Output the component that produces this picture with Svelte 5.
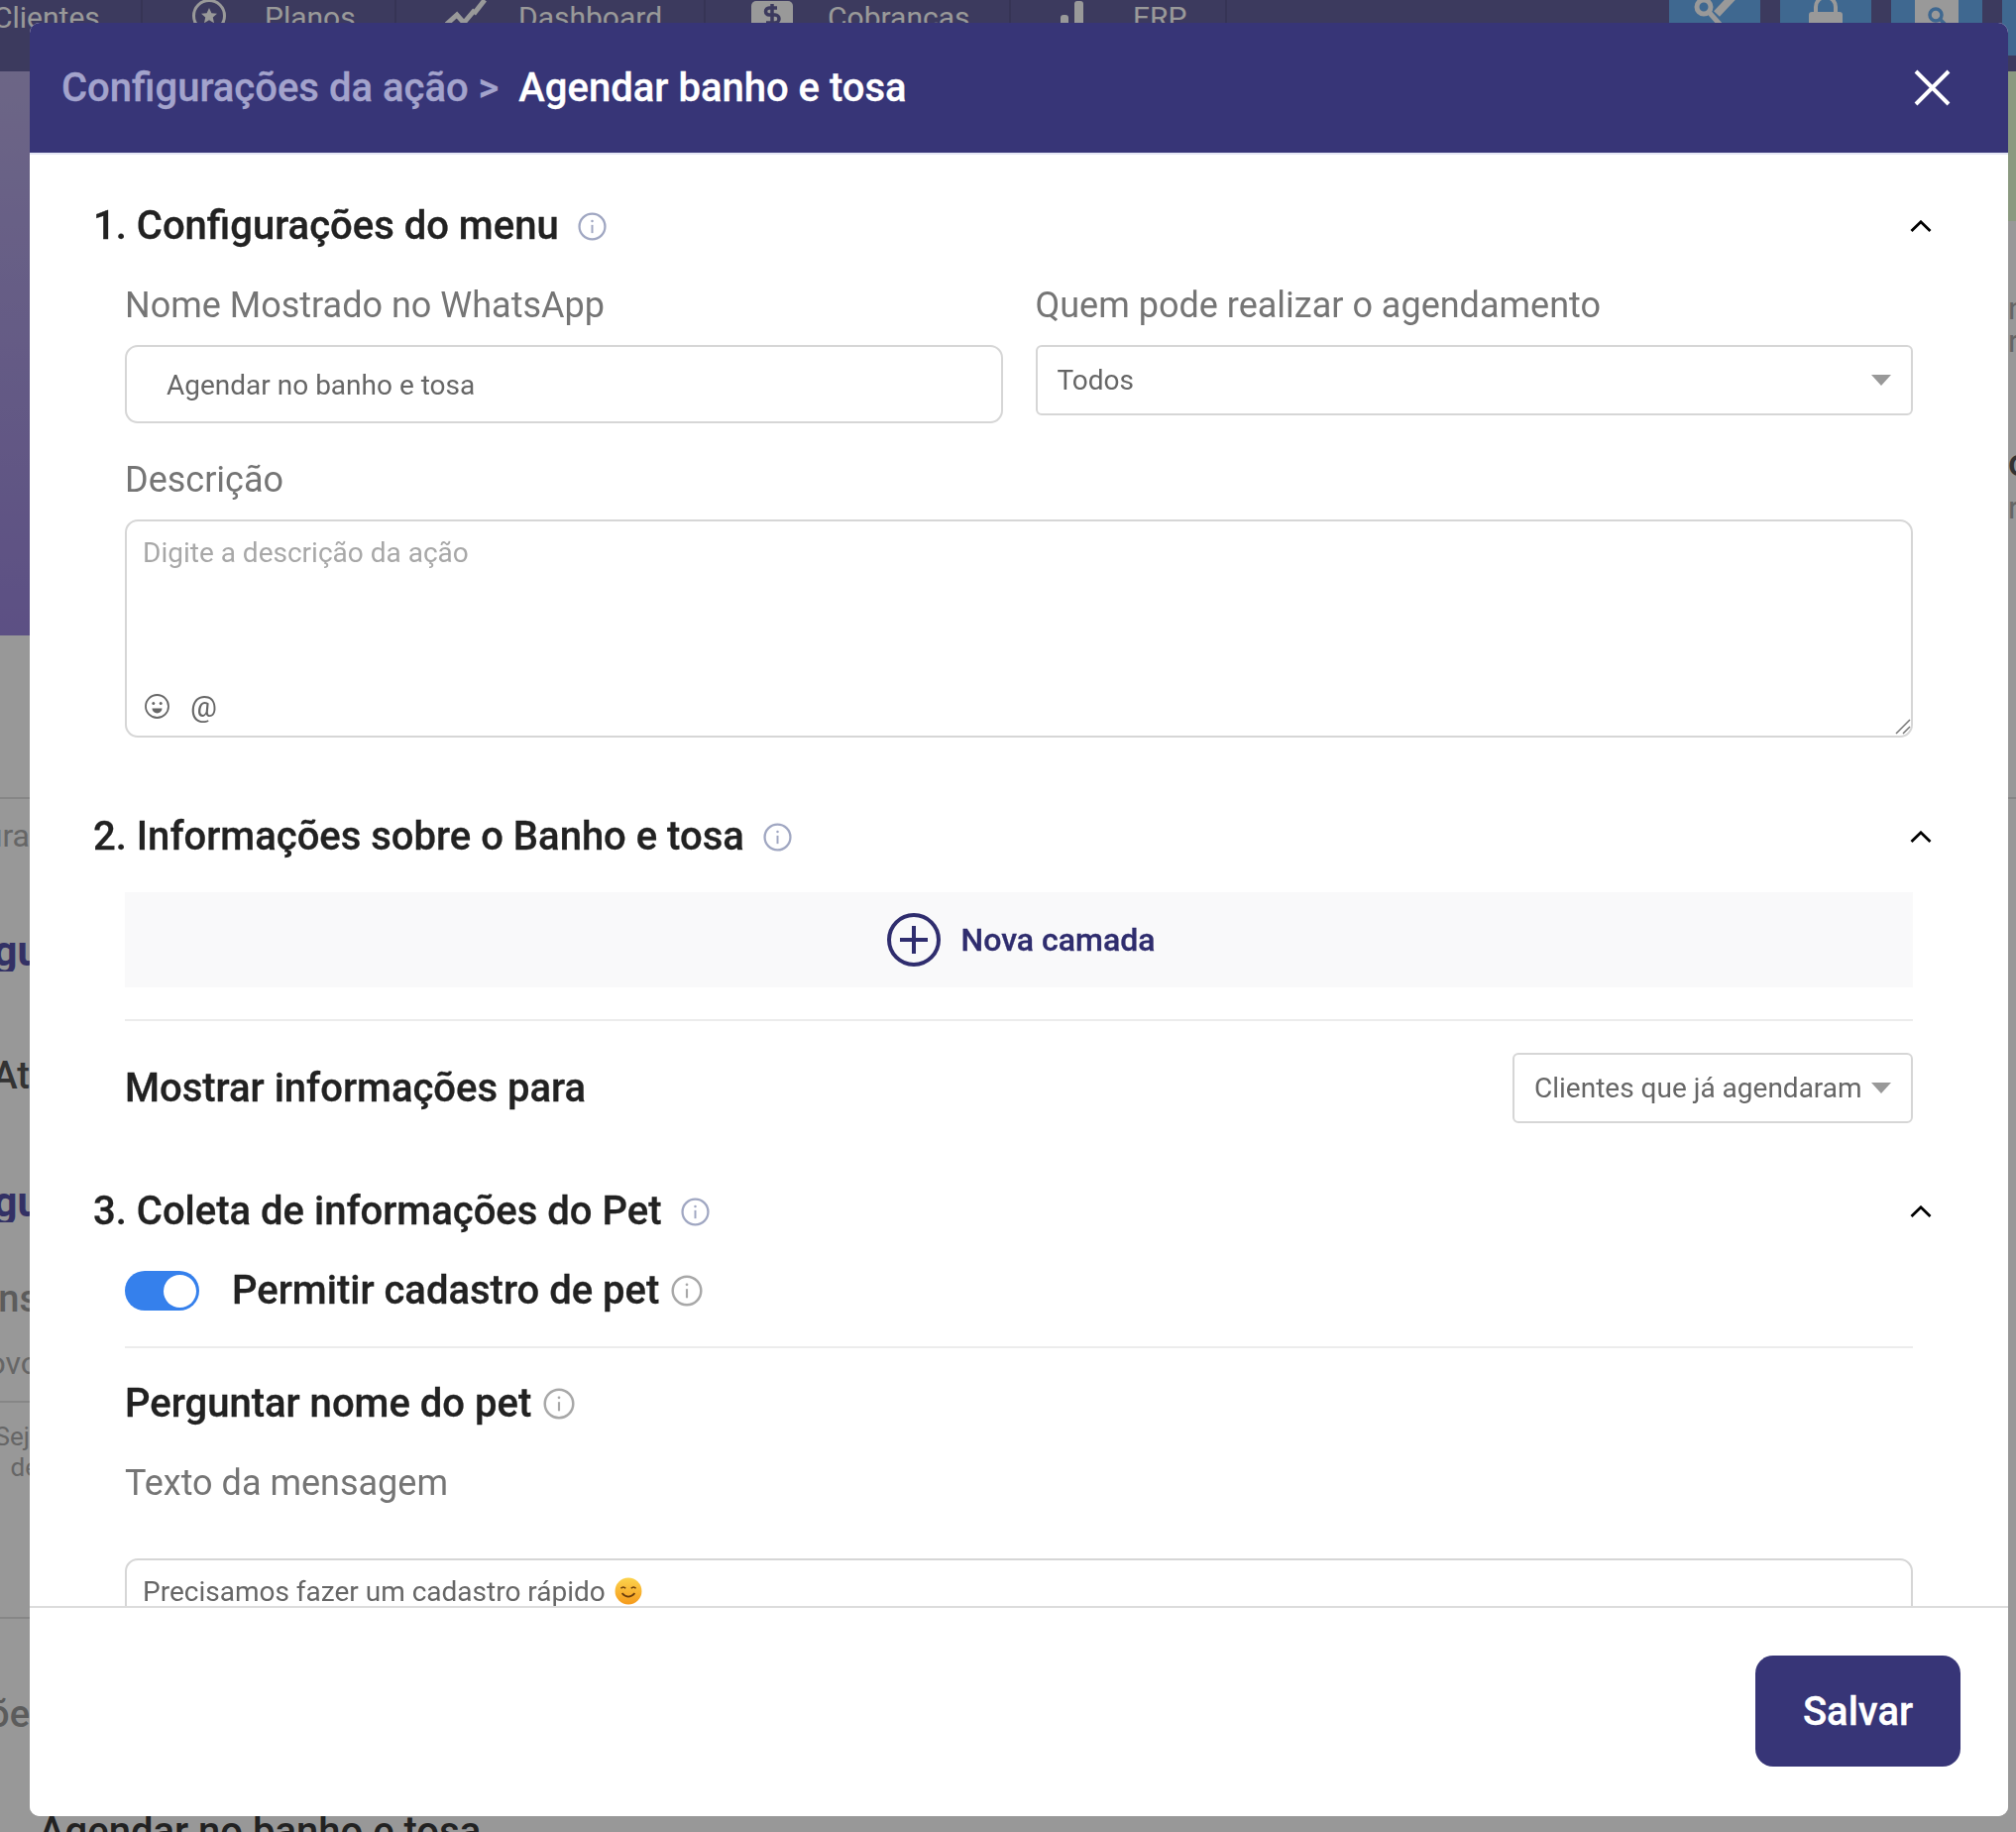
<script>
  const navItems = [
    { label: "Clientes", w: 144, icon: null, first: true },
    { label: "Planos", w: 256, icon: "star" },
    { label: "Dashboard", w: 312, icon: "chart" },
    { label: "Cobranças", w: 308, icon: "money" },
    { label: "ERP", w: 218, icon: "bars" },
  ];

  // what peeks out to the left of the modal: y is the centre of each row
  const leftRows = [
    { y: 805, line: true },
    { y: 843, text: "Configura", cls: "grey" },
    { y: 960, text: "Configu", cls: "navy" },
    { y: 1085, text: "At", cls: "dark" },
    { y: 1213, text: "Configu", cls: "navy" },
    { y: 1310, text: "Mens", cls: "grey strong crop" },
    { y: 1375, text: "Novo", cls: "grey crop" },
    { y: 1414, line: true },
    { y: 1449, text: "Sej", cls: "grey small" },
    { y: 1480, text: "de", cls: "grey small crop" },
    { y: 1632, line: true },
    { y: 1729, text: "Configuraçõe", cls: "grey strong" },
  ];
  const rightRows = [
    { y: 311, text: "n", cls: "grey" },
    { y: 344, text: "r", cls: "grey" },
    { y: 467, text: "o", cls: "dark" },
    { y: 512, text: "r", cls: "grey" },
    { y: 805, line: true },
  ];

  function withGaps(rows, start) {
    let prev = start;
    return rows.map((r) => {
      const h = r.line ? 2 : 40;
      const top = r.y - h / 2;
      const gap = Math.round(top - prev);
      prev = top + h;
      return { ...r, gap };
    });
  }

  const left = withGaps(leftRows, 641);
  const right = withGaps(rightRows, 223);
</script>

{#snippet info(cls = "")}
  <svg class="info {cls}" viewBox="0 0 28 28" fill="none" stroke="currentColor" aria-hidden="true">
    <circle cx="14" cy="14" r="12.5" stroke-width="2.2" />
    <path d="M14 12.4v8" stroke-width="1.9" />
    <circle cx="14" cy="8.6" r="1.2" fill="currentColor" stroke="none" />
  </svg>
{/snippet}

{#snippet chevron()}
  <svg class="chevron" viewBox="0 0 22 12" fill="none" stroke="#000" stroke-width="2.8" aria-hidden="true">
    <path d="M1.5 11 11 1.8 20.5 11" />
  </svg>
{/snippet}

<div class="page">
  <nav class="topnav">
    {#each navItems as item}
      <div class="navitem" class:first={item.first} style:width="{item.w}px">
        {#if item.icon}
          <span class="navicon">
            {#if item.icon === "star"}
              <svg width="36" height="36" viewBox="0 0 36 36" fill="none" stroke="#fff">
                <circle cx="18" cy="16" r="15.5" stroke-width="3" />
                <path d="m18 8 2.4 5.2 5.6.6-4.2 3.8 1.2 5.6-5-2.9-5 2.9 1.2-5.6L10 13.800l5.600-.6z" fill="#fff" stroke="none" />
              </svg>
            {:else if item.icon === "chart"}
              <svg width="42" height="36" viewBox="0 0 42 36" fill="none" stroke="#fff" stroke-width="5">
                <path d="M1 25 12 15l7 8 11-13" />
                <path d="M29 14 40 0" />
              </svg>
            {:else if item.icon === "money"}
              <svg class="shiftleft" width="44" height="36" viewBox="0 0 44 36">
                <rect x="1" y="1" width="42" height="35" rx="5" fill="#fff" />
                <path d="M27 8h-8a3.500 3.500 0 0 0 0 7h6a3.500 3.500 0 0 1 0 8h-9M22 4v24" fill="none" stroke="#64619d" stroke-width="3.500" />
              </svg>
            {:else}
              <svg width="36" height="36" viewBox="0 0 36 36" fill="#fff">
                <rect x="1" y="15" width="8" height="21" rx="3" />
                <rect x="15" y="1" width="9" height="35" rx="3" />
                <rect x="28" y="29" width="8" height="7" rx="3" />
              </svg>
            {/if}
          </span>
        {/if}
        <span>{item.label}</span>
      </div>
    {/each}
    <div class="navbuttons">
      <div class="navbtn">
        <svg width="44" height="40" viewBox="0 0 44 40" fill="none" stroke="#fff">
          <circle cx="11" cy="7" r="7" stroke-width="5" />
          <path d="M16 12 32 30" stroke-width="5" />
          <path d="M24 14 40 -3" stroke-width="8" />
        </svg>
      </div>
      <div class="navbtn">
        <svg width="36" height="40" viewBox="0 0 36 40" fill="none">
          <path d="M8 14V7a10 10 0 0 1 20 0v7" stroke="#fff" stroke-width="4" />
          <rect x="1" y="12" width="34" height="26" rx="3" fill="#fff" />
        </svg>
      </div>
      <div class="navbtn">
        <svg width="44" height="40" viewBox="0 0 44 40" fill="none">
          <rect x="0" y="-8" width="44" height="46" rx="6" fill="#fff" />
          <circle cx="21" cy="15" r="6" stroke="#69adf0" stroke-width="3.500" />
          <path d="m26 20 6 6" stroke="#69adf0" stroke-width="3.500" />
        </svg>
      </div>
      <div class="navbtn"></div>
    </div>
  </nav>

  <div class="stage">
    <div class="leftcol">
      <div class="hero"></div>
      {#each left as r}
        {#if r.line}
          <div class="rule" style:margin-top="{r.gap}px"></div>
        {:else}
          <div class="frag {r.cls}" style:margin-top="{r.gap}px"><span>{r.text}</span></div>
        {/if}
      {/each}
      <div class="under">Agendar no banho e tosa</div>
    </div>
    <div class="rightcol">
      <div class="greenband"></div>
      {#each right as r}
        {#if r.line}
          <div class="rule" style:margin-top="{r.gap}px"></div>
        {:else}
          <div class="frag start {r.cls}" style:margin-top="{r.gap}px"><span>{r.text}</span></div>
        {/if}
      {/each}
    </div>
  </div>
</div>

<div class="scrim"></div>

<div class="modal">
  <header class="modalhead">
    <h2><span class="crumb">Configurações da ação &gt;</span> <span>Agendar banho e tosa</span></h2>
    <svg class="close" viewBox="0 0 37 37" stroke="#fff" stroke-width="4" aria-label="Fechar">
      <path d="M2 2 35 35M35 2 2 35" />
    </svg>
  </header>

  <div class="modalbody">
    <section class="first">
      <div class="sechead">
        <h3>1. Configurações do menu {@render info()}</h3>
        {@render chevron()}
      </div>
      <div class="fields">
        <div class="tworow">
          <div>
            <div class="label">Nome Mostrado no WhatsApp</div>
            <input class="textinput" value="Agendar no banho e tosa" />
          </div>
          <div>
            <div class="label">Quem pode realizar o agendamento</div>
            <div class="select"><span>Todos</span><i class="arrow"></i></div>
          </div>
        </div>
        <div class="label desc">Descrição</div>
        <div class="areawrap">
          <textarea placeholder="Digite a descrição da ação"></textarea>
          <div class="areatools">
            <svg width="27" height="27" viewBox="0 0 27 27" fill="none" stroke="#666" stroke-width="1.800">
              <circle cx="13.500" cy="13.500" r="11.500" />
              <circle cx="9.800" cy="10.500" r="1.500" fill="#666" stroke="none" />
              <circle cx="17.200" cy="10.500" r="1.500" fill="#666" stroke="none" />
              <path d="M8.500 15.500h10a5 5 0 0 1-10 0z" fill="#666" stroke="none" />
            </svg>
            <span class="at">@</span>
          </div>
          <svg class="grip" width="16" height="16" viewBox="0 0 16 16" fill="none" stroke="#777" stroke-width="1.500">
            <path d="M1 15 15 1M8 15l7-7" />
          </svg>
        </div>
      </div>
    </section>

    <section class="second">
      <div class="sechead">
        <h3>2. Informações sobre o Banho e tosa {@render info()}</h3>
        {@render chevron()}
      </div>
      <div class="fields">
        <div class="newlayer">
          <svg width="54" height="54" viewBox="0 0 54 54" fill="none" stroke="#2f2d6e" stroke-width="4">
            <circle cx="27" cy="27" r="25" />
            <path d="M27 13v28M13 27h28" />
          </svg>
          <span>Nova camada</span>
        </div>
        <hr />
        <div class="showfor">
          <div class="bigtitle">Mostrar informações para</div>
          <div class="select small"><span>Clientes que já agendaram</span><i class="arrow"></i></div>
        </div>
      </div>
    </section>

    <section class="third">
      <div class="sechead">
        <h3>3. Coleta de informações do Pet {@render info()}</h3>
        {@render chevron()}
      </div>
      <div class="fields">
        <div class="togglerow">
          <span class="toggle"><span class="knob"></span></span>
          <span class="bigtitle">Permitir cadastro de pet</span>
          {@render info("grey big")}
        </div>
        <hr class="tight" />
        <div class="bigtitle askname">Perguntar nome do pet {@render info("grey big")}</div>
        <div class="label msg">Texto da mensagem</div>
        <div class="msgbox">
          Precisamos fazer um cadastro rápido
          <svg class="emoji" width="28" height="28" viewBox="0 0 26 26" role="img" aria-label="sorriso">
            <defs>
              <linearGradient id="face" x1="0" y1="0" x2="0" y2="1">
                <stop offset="0" stop-color="#fcd34d" />
                <stop offset="1" stop-color="#f59a1b" />
              </linearGradient>
            </defs>
            <circle cx="13" cy="13" r="12.500" fill="url(#face)" />
            <path d="M6 10.500q2.200-2.500 4.400 0M15.600 10.500q2.200-2.500 4.400 0M7 15q6 6.500 12 0" fill="none" stroke="#6b3d0c" stroke-width="1.500" />
          </svg>
        </div>
      </div>
    </section>
  </div>

  <footer class="modalfoot">
    <button class="save">Salvar</button>
  </footer>
</div>

<style>
  :global(body) {
    margin: 0;
    font-family: Roboto, "Liberation Sans", sans-serif;
    overflow: hidden;
  }

  .page {
    width: 2034px;
    height: 1848px;
    background: #fdfdfe;
    overflow: hidden;
  }
  .topnav {
    display: flex;
    height: 72px;
    background: #64619d;
    color: #fff;
    font-size: 30px;
    line-height: 36px;
  }
  .navitem {
    flex: none;
    display: flex;
    box-sizing: border-box;
    padding-left: 49px;
    border-right: 2px solid #5a578e;
  }
  .navitem.first {
    padding-left: 0;
    margin-left: -2px;
    width: 146px !important;
    text-indent: -5px;
  }
  .navicon {
    width: 74px;
    flex: none;
  }
  .shiftleft {
    margin-left: -4px;
  }
  .navbuttons {
    display: flex;
    gap: 20px;
    margin-left: 446px;
  }
  .navbtn {
    width: 92px;
    height: 56px;
    flex: none;
    background: #69adf0;
    display: flex;
    justify-content: center;
    overflow: hidden;
  }

  .stage {
    display: flex;
    justify-content: space-between;
  }
  .leftcol {
    width: 30px;
    flex: none;
  }
  .rightcol {
    width: 8px;
    flex: none;
  }
  .hero {
    height: 569px;
    background: linear-gradient(180deg, #b5aae0, #9a85dc);
  }
  .greenband {
    height: 151px;
    background: #e6ffd6;
  }
  .rule {
    height: 2px;
    background: #e0e0e0;
  }
  .frag {
    height: 40px;
    line-height: 40px;
    font-size: 32px;
    overflow: hidden;
    display: flex;
    justify-content: flex-end;
    white-space: nowrap;
  }
  .frag.start {
    justify-content: flex-start;
  }
  .frag span {
    flex: none;
  }
  .frag.crop span {
    margin-right: -9px;
  }
  .grey {
    color: #aaa;
  }
  .grey.strong {
    font-weight: 500;
    font-size: 38px;
    color: #999;
  }
  .grey.small {
    font-size: 26px;
  }
  .navy {
    color: #5552a8;
    font-weight: 700;
    font-size: 42px;
  }
  .navy span {
    margin-right: -11px;
  }
  .dark {
    color: #555;
    font-weight: 500;
    font-size: 38px;
  }
  .under {
    margin: 76px 0 0 39px;
    font-size: 40px;
    font-weight: 500;
    line-height: 46px;
    color: #3a3a3a;
    white-space: nowrap;
  }

  .scrim {
    position: fixed;
    inset: 0;
    background: rgba(0, 0, 0, 0.4);
  }

  .modal {
    position: fixed;
    left: 30px;
    top: 23px;
    width: 1996px;
    height: 1809px;
    display: flex;
    flex-direction: column;
    background: #fff;
    border-radius: 10px;
    overflow: hidden;
    color: #222;
  }
  .modalhead {
    flex: none;
    height: 133px;
    display: flex;
    align-items: center;
    justify-content: space-between;
    background: #373577;
    box-sizing: border-box;
    padding: 0 58px 0 32px;
    border-bottom: 2px solid #e4e7f5;
  }
  h2 {
    margin: 0;
    font-size: 40px;
    font-weight: 500;
    color: #fff;
    -webkit-text-stroke: 0.3px currentColor;
  }
  .crumb {
    color: #a3a3cc;
    margin-right: 10px;
  }
  .close {
    width: 37px;
    height: 37px;
  }

  .modalbody {
    flex: 1;
    min-height: 0;
    overflow: hidden;
  }
  section {
    padding: 0 96px 0 64px;
  }
  section.first {
    padding-top: 48px;
  }
  section.second {
    padding-top: 76px;
  }
  section.third {
    padding-top: 65px;
  }
  .sechead {
    height: 48px;
    display: flex;
    align-items: center;
    justify-content: space-between;
    margin-right: -19px;
  }
  h3 {
    margin: 0;
    display: flex;
    align-items: center;
    gap: 19px;
    font-size: 40px;
    font-weight: 500;
    line-height: 48px;
    white-space: nowrap;
    -webkit-text-stroke: 0.3px currentColor;
  }
  .info {
    width: 29px;
    height: 29px;
    flex: none;
    color: #a0a7c2;
    -webkit-text-stroke: 0;
  }
  .info.grey {
    color: #a8a8a8;
  }
  .info.big {
    width: 32px;
    height: 32px;
  }
  .chevron {
    width: 22px;
    height: 12px;
    flex: none;
  }

  .fields {
    padding: 34px 0 0 32px;
  }
  .second .fields {
    padding-top: 32px;
  }
  .third .fields {
    padding-top: 36px;
  }
  .tworow {
    display: grid;
    grid-template-columns: 1fr 1fr;
    gap: 33px;
    align-items: start;
  }
  .label {
    font-size: 36px;
    line-height: 44px;
    color: #757575;
    margin-bottom: 18px;
    white-space: nowrap;
  }
  .label.desc {
    margin-top: 35px;
    margin-bottom: 18px;
  }
  .label.msg {
    margin-top: 34px;
    margin-bottom: 54px;
  }
  .textinput {
    display: block;
    width: 100%;
    height: 79px;
    box-sizing: border-box;
    padding: 2px 40px 0;
    border: 2px solid #d6d6d6;
    border-radius: 13px;
    font: 400 28px Roboto, sans-serif;
    color: #666;
    outline: none;
  }
  .select {
    height: 71px;
    box-sizing: border-box;
    display: flex;
    align-items: center;
    justify-content: space-between;
    padding: 0 20px;
    border: 2px solid #d6d6d6;
    border-radius: 6px;
    font-size: 28px;
    color: #666;
    white-space: nowrap;
  }
  .select.small {
    width: 404px;
  }
  .arrow {
    width: 0;
    height: 0;
    border-left: 10px solid transparent;
    border-right: 10px solid transparent;
    border-top: 11px solid #999;
  }

  .areawrap {
    position: relative;
  }
  textarea {
    display: block;
    width: 100%;
    height: 220px;
    box-sizing: border-box;
    padding: 16px 16px;
    border: 2px solid #d6d6d6;
    border-radius: 13px;
    font: 400 28px Roboto, sans-serif;
    line-height: 32px;
    color: #666;
    outline: none;
    resize: none;
  }
  textarea::placeholder {
    color: #a8a8a8;
    opacity: 1;
  }
  .areatools {
    position: absolute;
    left: 19px;
    bottom: 18px;
    display: flex;
    align-items: center;
    gap: 20px;
  }
  .at {
    font-size: 30px;
    line-height: 27px;
    color: #666;
  }
  .grip {
    position: absolute;
    right: 2px;
    bottom: 3px;
  }

  .newlayer {
    height: 96px;
    display: flex;
    align-items: center;
    justify-content: center;
    gap: 21px;
    padding-left: 4px;
    background: #f9f9fa;
    color: #2f2d6e;
    font-size: 32px;
    font-weight: 500;
    -webkit-text-stroke: 0.3px currentColor;
  }
  hr {
    height: 2px;
    margin: 32px 0;
    border: 0;
    background: #ececec;
  }
  hr.tight {
    margin: 36px 0 32px;
  }
  .showfor {
    display: flex;
    align-items: center;
    justify-content: space-between;
  }
  .bigtitle {
    font-size: 40px;
    font-weight: 500;
    line-height: 48px;
    color: #222;
    white-space: nowrap;
    -webkit-text-stroke: 0.3px currentColor;
  }
  .togglerow {
    height: 40px;
    display: flex;
    align-items: center;
  }
  .togglerow .info {
    margin-left: 12px;
  }
  .toggle {
    width: 75px;
    height: 40px;
    flex: none;
    display: flex;
    justify-content: flex-end;
    align-items: center;
    box-sizing: border-box;
    padding-right: 3px;
    margin-right: 33px;
    border-radius: 20px;
    background: #3580ec;
  }
  .knob {
    width: 33px;
    height: 33px;
    border-radius: 50%;
    background: #fff;
  }
  .askname {
    display: flex;
    align-items: center;
    gap: 12px;
  }
  .msgbox {
    display: flex;
    align-items: flex-start;
    gap: 9px;
    height: 218px;
    box-sizing: border-box;
    padding: 16px 16px;
    border: 2px solid #d6d6d6;
    border-radius: 13px;
    font-size: 28px;
    line-height: 32px;
    color: #666;
  }
  .emoji {
    flex: none;
    margin-top: 1px;
  }

  .modalfoot {
    flex: none;
    height: 212px;
    box-sizing: border-box;
    display: flex;
    justify-content: flex-end;
    padding: 48px 48px 0 0;
    border-top: 2px solid #dcdcdc;
    background: #fff;
    position: relative;
  }
  .save {
    width: 207px;
    height: 112px;
    border: 0;
    border-radius: 18px;
    background: #373577;
    color: #fff;
    font: 500 40px Roboto, sans-serif;
    -webkit-text-stroke: 0.3px currentColor;
  }
</style>
